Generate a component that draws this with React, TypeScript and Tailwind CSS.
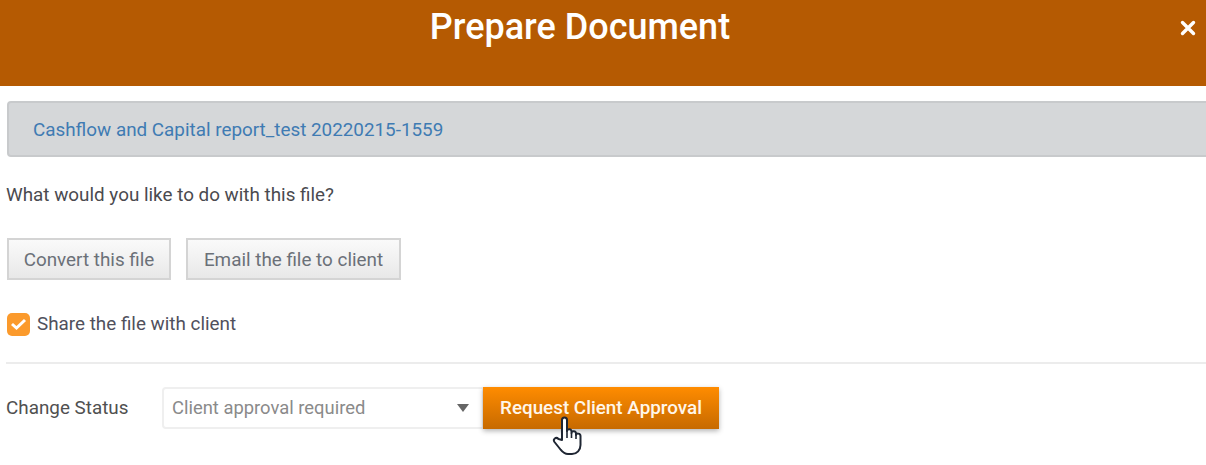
export default function App() {
  return (
    <div className="relative w-[1206px] h-[465px] overflow-hidden bg-white font-['Roboto',sans-serif] text-[18.85px]">
      <header className="relative flex h-[86px] justify-center bg-[#b55a02] pt-[4px] pr-[46px]">
        <h1 className="text-[36px] leading-[46px] font-medium text-white">Prepare Document</h1>
        <svg className="absolute right-[10px] top-[20px]" width="16" height="16" viewBox="0 0 16 16" aria-hidden="true">
          <path d="M2.5 2.5 L13.5 13.5 M13.5 2.5 L2.5 13.5" stroke="#fff" strokeWidth="3.4" strokeLinecap="round" />
        </svg>
      </header>

      <main className="pl-[6px] pt-[15px]">
        <div className="ml-px flex h-[56px] w-[1210px] items-center rounded-[4px] border-2 border-[#c8cacc] bg-[#d5d7d9] pl-[24px] pt-[3px] text-[#3f7bb3]">
          Cashflow and Capital report_test 20220215-1559
        </div>

        <p className="mt-[26px] leading-[24px] text-[#4a4a4f]">What would you like to do with this file?</p>

        <div className="ml-px mt-[31px] flex gap-[15px]">
          <button className="h-[42px] w-[164px] border-2 border-[#d4d4d4] bg-gradient-to-b from-[#fafafa] to-[#e8e8e8] pt-[2px] text-[#6b7078]">
            Convert this file
          </button>
          <button className="h-[42px] w-[215px] border-2 border-[#d4d4d4] bg-gradient-to-b from-[#fafafa] to-[#e8e8e8] pt-[2px] text-[#6b7078]">
            Email the file to client
          </button>
        </div>

        <label className="ml-px mt-[32px] flex h-[24px] items-center gap-[7px] text-[#50505c]">
          <span className="flex h-[23px] w-[23px] items-center justify-center rounded-[5px] bg-[#fb9a2c]">
            <svg width="17" height="14" viewBox="0 0 17 14" aria-hidden="true">
              <path d="M2 7 L6.5 11 L15 3" fill="none" stroke="#fff" strokeWidth="3" />
            </svg>
          </span>
          Share the file with client
        </label>

        <hr className="mt-[26px] border-t-2 border-[#ececec]" />

        <div className="mt-[23px] flex items-center">
          <span className="w-[156px] text-[#505050]">Change Status</span>
          <div className="flex h-[42px] w-[322px] items-center justify-between rounded-l-[4px] border-2 border-[#efefef] pl-[8px] pr-[13px] text-[18.4px] text-[#8a8a8a]">
            Client approval required
            <span className="h-0 w-0 border-x-[6px] border-t-[8px] border-x-transparent border-t-[#666]" />
          </div>
          <button className="ml-[-1px] h-[42px] w-[236px] bg-gradient-to-b from-[#ff8c00] to-[#c76a00] font-medium text-[#fff6ea] shadow-[0_2px_5px_rgba(0,0,0,0.3)]">
            Request Client Approval
          </button>
        </div>
      </main>

      <svg className="absolute left-[552px] top-[415px]" width="32" height="41" viewBox="0 0 32 41" aria-hidden="true">
        <path
          d="M10 25 V5 C10 1.5 15 1.5 15 5 V16 C15 13.5 19.5 13.5 19.5 16.5 V18 C19.5 15.5 24 15.5 24 18.5 V20 C24 18 28.5 18 28.5 21 V30 C28.5 35 25 39 20 39 H16 C12 39 10.5 37 8.5 34.5 L2.5 27 C0.5 24 4 21.5 6.5 24 Z"
          fill="#fff"
          stroke="#1f2633"
          strokeWidth="2"
          strokeLinejoin="round"
        />
        <path d="M15 16 V23 M19.5 18 V23 M24 20 V24" fill="none" stroke="#1f2633" strokeWidth="1.6" />
      </svg>
    </div>
  );
}
